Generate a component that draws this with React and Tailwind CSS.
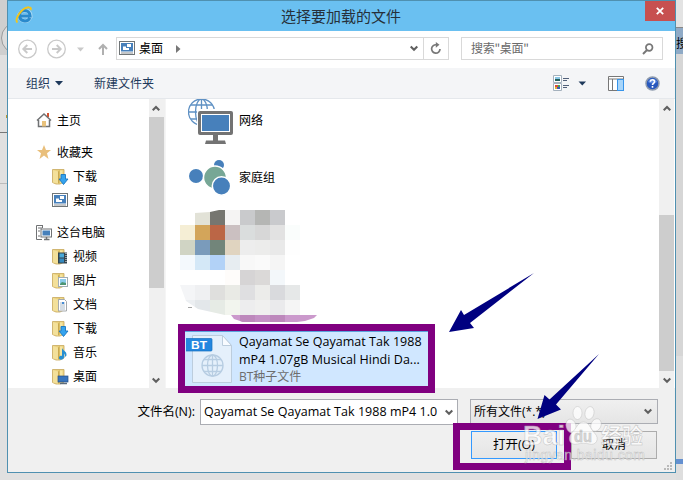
import React, { useState } from "react";

const PLACES = [
  { label: "主页", icon: "home" },
  { label: "收藏夹", icon: "star", gap: true },
  { label: "下载", icon: "download", child: true },
  { label: "桌面", icon: "desktop", child: true },
  { label: "这台电脑", icon: "pc", gap: true },
  { label: "视频", icon: "video", child: true },
  { label: "图片", icon: "picture", child: true },
  { label: "文档", icon: "document", child: true },
  { label: "下载", icon: "download", child: true },
  { label: "音乐", icon: "music", child: true },
  { label: "桌面", icon: "deskfolder", child: true },
];

const MOSAIC = [
  [null, "#e2e2d7", "#767670", "#f5f4f3", "#c9cacc", "#b5b6b4", "#c9cacd", null],
  ["#f5eed5", "#d3a55a", "#bb6646", "#cbc0c1", "#dadddd", "#d7d7d7", "#e2e2e2", "#fafdfc"],
  ["#d0d4c4", "#7a9bbb", "#72857a", "#e0d4c0", "#ededed", "#ececeb", "#e9e9e9", "#fefefe"],
  ["#f4f9fd", "#d4e8f7", "#b2d2f7", "#e7edf1", "#f8f8f8", "#fafafa", "#f5f5f5", null],
  [null, null, null, "#fefcfa", "#d6d4d5", "#dbd9d8", "#f3f7fa", null],
  ["#f4f5f7", "#eff0f2", "#dfdfdd", "#e9eae5", "#dfdfe1", "#ececea", "#d9dadd", "#e6e8e8"],
  ["#eceff2", "#e3e7ea", "#e6ebe5", "#f2f5ee", "#ededee", "#f0f0ef", "#eaeaec", "#f5f5f5"],
];

function DesktopIcon() {
  return (
    <svg width="17" height="15" viewBox="0 0 17 15" className="shrink-0">
      <rect x="0.5" y="0.5" width="15" height="13" fill="#fff" stroke="#707577" />
      <rect x="2" y="2" width="12" height="8.500" fill="#4780bb" />
      <path d="M8 3h4v3H8zM4 5.500h3v1.500h3v2H4z" fill="#fff" />
      <path d="M2 12h12" stroke="#8b8f92" />
    </svg>
  );
}

function FolderIcon({ type }) {
  return (
    <svg width="17" height="17" viewBox="0 0 17 17" className="shrink-0">
      <path d="M.5 1.500h11.500V14L8 16H4L.5 14.500z" fill="#ead07c" stroke="#cdb069" strokeWidth=".9" />
      <path d="M1 2l5 1.500v12L1 14.500z" fill="#f3e09a" />
      <path d="M6 3.500 7.500 2v12.500L6 15.500z" fill="#c9a94f" />
      <path d="M8 2.500h2.500V14L8 15z" fill="#f6e5a2" />
      {type === "download" && (
        <path d="M9 6.500h4.500V11H16l-4.500 5.500L7 11h2z" fill="#35a3ee" stroke="#1976bf" strokeWidth=".9" />
      )}
      {type === "video" && (
        <>
          <rect x="6" y="4.500" width="9" height="11" fill="#34444e" />
          <rect x="7.500" y="5.500" width="4.500" height="4" fill="#48a8d8" />
          <rect x="7.500" y="10.500" width="4.500" height="4" fill="#368abf" />
          <path d="M14 5v10" stroke="#fff" strokeDasharray="1 1" />
        </>
      )}
      {type === "picture" && (
        <>
          <rect x="6.500" y="5.500" width="9" height="9" fill="#fff" stroke="#a1adb4" />
          <rect x="8" y="7" width="6" height="6" fill="#8ccbea" />
          <path d="M8 12l2-2 4 1v2H8z" fill="#4d9574" />
        </>
      )}
      {type === "document" && (
        <>
          <path d="M6.500 3.500h6l2 2v9.500h-8z" fill="#fff" stroke="#a4a9ad" />
          <path d="M8 7h5M8 9h5M8 11h5M8 13h5" stroke="#93a8bd" strokeWidth=".8" />
          <path d="M10 6h2v2h-2z" fill="#468bd4" />
        </>
      )}
      {type === "music" && (
        <path d="M10 4c1 3 5 3 4.500 7.500l-2 2c1-3 0-3-.5-4v4c-1 3-5.500 3-5 0 0-1.500 2-2 3-1.500z" fill="#278fd2" />
      )}
      {type === "deskfolder" && (
        <>
          <rect x="6" y="8" width="10" height="6" fill="#3774be" stroke="#274e83" strokeWidth=".7" />
          <path d="M8 15.500h7" stroke="#5c6c7c" strokeWidth="1.500" />
        </>
      )}
    </svg>
  );
}

function PlaceIcon({ type }) {
  if (type === "desktop") return <DesktopIcon />;
  if (type === "home") {
    return (
      <svg width="16" height="16" viewBox="0 0 16 16" className="shrink-0">
        <path d="M11 1h2v4h-2z" fill="#d6512e" />
        <path d="M2.500 8v6.500h11V8M1 8.500 8 2l7 6.500" fill="none" stroke="#707274" strokeWidth="1.500" />
        <path d="M6 9h4v5.500H6z" fill="#e9c27c" />
      </svg>
    );
  }
  if (type === "star") {
    return (
      <svg width="16" height="16" viewBox="0 0 16 16" className="shrink-0">
        <path d="M8 1l2 5h5l-4 3.200L12.500 15 8 11.500 3.500 15 5 9.200 1 6h5z" fill="#e9bf7b" />
      </svg>
    );
  }
  if (type === "pc") {
    return (
      <svg width="16" height="17" viewBox="0 0 16 17" className="shrink-0">
        <path d="M6 1.500H.5v14H6M2 4h4M2 7h2M2 12h2M6.500 4V1" fill="none" stroke="#707274" />
        <rect x="5" y="5" width="10.500" height="8" fill="#fff" stroke="#707274" />
        <rect x="6.500" y="6.500" width="7.500" height="5" fill="#4780bb" />
        <path d="M10.500 13v2.500M8 15.500h5.500" stroke="#707274" strokeWidth="1.500" />
      </svg>
    );
  }
  return <FolderIcon type={type} />;
}

function Chevron({ up, className }) {
  return (
    <svg width="8" height="7" viewBox="0 0 8 7" className={className}>
      <path d={up ? "M.7 5.300 4 2l3.300 3.300" : "M.7 1.500 4 4.800l3.300-3.300"} fill="none" stroke="#5f5f5f" strokeWidth="2.100" />
    </svg>
  );
}

function TitleBar() {
  return (
    <header className="flex h-[30px] shrink-0 bg-[#6ac0f1]">
      <svg width="18" height="18" viewBox="0 0 18 18" className="mt-[5px] ml-[7px]">
        <path d="M15 11.500C13 17 4.500 15.500 4.500 9.500c0-6.500 11-7 11 .5H6" fill="none" stroke="#a9d8f3" strokeWidth="4" />
        <path d="M14.800 11.800C12.500 16.800 4.500 15.500 4.500 9.500c0-6.500 10.300-7 10.600.5H6" fill="none" stroke="#2a8acc" strokeWidth="3" />
        <path d="M2.500 16.500C-1.500 14 7 1 14 1.200c2 0 2.200 1.600 1.500 3" fill="none" stroke="#f3c51b" strokeWidth="1.900" />
      </svg>
      <h1 className="flex-1 pl-1 text-center text-[15px] leading-[29px] text-[#26303a]">选择要加载的文件</h1>
      <button type="button" className="flex h-5 w-[30px] items-center justify-center bg-[#c75050]">
        <svg width="8" height="8" viewBox="0 0 8 8">
          <path d="M.8.8l6.400 6.400M7.200.8.8 7.200" stroke="#fff" strokeWidth="1.800" />
        </svg>
      </button>
    </header>
  );
}

function NavBar() {
  return (
    <nav className="flex h-[37px] shrink-0 items-start bg-white pt-1.5">
      <svg width="100" height="24" viewBox="0 0 100 24" className="shrink-0" fill="none" stroke="#c9c9c9">
        <circle cx="19.500" cy="12" r="8.800" strokeWidth="1.300" />
        <circle cx="48.500" cy="12" r="8.800" strokeWidth="1.300" />
        <path d="M24 12h-8.500m3.800-4-4 4 4 4M44 12h8.500m-3.800-4 4 4-4 4" strokeWidth="1.900" />
        <path d="M69 10.500h7l-3.500 4z" fill="#c9c9c9" stroke="none" />
        <path d="M95 18V8m-4 4 4-4 4 4" stroke="#b0b0b0" strokeWidth="2" />
      </svg>
      <div className="ml-2 flex h-[23px] w-[333px] border border-[#d9d9d9]">
        <div className="flex flex-1 items-center pl-0.5">
          <DesktopIcon />
          <span className="ml-[3px] pb-0.5 text-xs leading-5">桌面</span>
          <svg width="5" height="8" viewBox="0 0 5 8" className="ml-[13px]">
            <path d="M0 0l4.500 4L0 8z" fill="#777" />
          </svg>
          <Chevron className="mr-[5px] ml-auto" />
        </div>
        <button type="button" className="flex w-[25px] items-center justify-center border-l border-[#d9d9d9]">
          <svg width="12" height="13" viewBox="0 0 12 13">
            <path d="M6.500 2.800A4.200 4.200 0 1 0 10 7" fill="none" stroke="#777" strokeWidth="1.700" />
            <path d="M5.800 0 9.500 2.800 5.800 5.800z" fill="#777" />
          </svg>
        </button>
      </div>
      <div className="ml-3 flex h-[23px] w-[202px] items-center border border-[#d9d9d9] px-[9px] text-xs text-[#6b6b6b]">
        <span className="pb-0.5 tracking-[-0.3px]">搜索"桌面"</span>
        <svg width="12" height="12" viewBox="0 0 12 12" className="-mr-px ml-auto" fill="none" stroke="#777">
          <circle cx="7.200" cy="4.500" r="3.300" strokeWidth="1.700" />
          <path d="M5 7 1 11" strokeWidth="2" />
        </svg>
      </div>
    </nav>
  );
}

function Toolbar() {
  return (
    <div className="flex h-[31px] shrink-0 items-center border-b border-[#e5e8ec] bg-[#f4f5f7] pl-[18px] text-xs text-[#1e395b]">
      <span>组织</span>
      <svg width="8" height="5" viewBox="0 0 8 5" className="ml-[5px]"><path d="M0 0h8L4 4.500z" fill="#1e395b" /></svg>
      <span className="ml-[31px]">新建文件夹</span>
      <svg width="33" height="17" viewBox="0 0 33 17" className="ml-auto">
        <path d="M.5.5h8v7h-8zM.5 8.500h8v7h-8z" fill="#fff" stroke="#a4b1bd" />
        <path d="M2 2h5v2H2z" fill="#8bc7e6" /><path d="M2 4h5v2H2z" fill="#24605b" />
        <path d="M2 10h3v2H2z" fill="#da4c36" /><path d="M5 10h2v2H5z" fill="#40a353" />
        <path d="M2 12h2v2H2z" fill="#e1b62f" /><path d="M4 12h3v2H4z" fill="#4358b3" />
        <path d="M10 3.500h6M10 5.500h4M10 10.500h6M10 12.500h4" stroke="#516079" />
        <path d="M25.500 6.500H33l-3.750 4z" fill="#1e395b" />
      </svg>
      <svg width="16" height="15" viewBox="0 0 16 15" className="ml-[22px]">
        <path d="M.5.500h15v14H.5zM.5 3h15M4.500 3v11" fill="#fff" stroke="#777" />
        <rect x="9.500" y="3.500" width="6" height="11" fill="#a7d5fa" stroke="#3794ea" />
      </svg>
      <svg width="15" height="15" viewBox="0 0 15 15" className="mr-[15px] ml-[21px]">
        <circle cx="7.500" cy="7.500" r="6.500" fill="#2858bd" stroke="#8f9bad" strokeWidth="1.500" />
        <path d="M3 6a4.800 4.800 0 0 1 9 0c-3 2-6 2-9 0z" fill="#5c8ae0" />
        <path d="M5.400 5.800c.1-3 4.500-2.500 4.100 0-.3 1.600-2 1.500-2 3.200M7.500 10v1.700" fill="none" stroke="#fff" strokeWidth="1.600" />
      </svg>
    </div>
  );
}

function Sidebar() {
  return (
    <aside className="flex w-[157px] shrink-0">
      <ul className="flex-1 pt-[9px]">
        {PLACES.map((p, i) => (
          <li
            key={i}
            className={`flex h-6 items-center text-xs whitespace-nowrap ${p.gap ? "mt-2" : ""} ${p.child ? "gap-1 pl-11" : "gap-[5px] pl-7"}`}
          >
            <PlaceIcon type={p.icon} />
            <span>{p.label}</span>
          </li>
        ))}
      </ul>
      <div className="flex w-4 flex-col items-start bg-[#f0f0f0]">
        <Chevron up className="mx-[3px] mt-1.5 mb-[5px]" />
        <div className="h-[171px] w-[15px] bg-[#cdcdcd]" />
        <Chevron className="mx-[3px] mt-auto mb-1" />
      </div>
    </aside>
  );
}

function Mosaic() {
  return (
    <svg width="140" height="114" viewBox="0 0 140 114" className="block" shapeRendering="crispEdges">
      <defs>
        <clipPath id="patch">
          <path d="M0 15h15V3l15-1 9-2h81v107H54l-18-4-18-4-12-8-6-16z" />
        </clipPath>
        <clipPath id="blob">
          <path d="M51 105h86l-3 3-9 3-8 1H63l-9-3z" />
        </clipPath>
      </defs>
      <g clipPath="url(#patch)">
        {MOSAIC.map((row, y) =>
          row.map((c, x) => c && <rect key={`${x}-${y}`} x={x * 15} y={y * 15} width="15" height="15" fill={c} />)
        )}
      </g>
      <g clipPath="url(#blob)">
        <path d="M50 105h90v8H50z" fill="#cb99cc" />
        <path d="M60 105h15v8H60zM90 105h15v8H90z" fill="#bd88bc" />
        <path d="M75 105h15v8H75z" fill="#c491c5" />
      </g>
      <path d="M8 97.500h4" stroke="#a5a5a5" />
    </svg>
  );
}

function FileList() {
  return (
    <section className="flex min-w-0 flex-1 border-l border-[#f5f5f5] bg-white">
      <div className="flex min-w-0 flex-1 flex-col overflow-hidden">
        <div className="flex h-[45px] shrink-0 pl-[22px]">
          <svg width="46" height="45" viewBox="0 0 46 45">
            <g fill="none" stroke="#5f91c4" strokeWidth="1.300">
              <circle cx="13.500" cy="13" r="13" />
              <ellipse cx="13.500" cy="13" rx="6" ry="13" />
              <path d="M13.500 0v26M.5 13h26M3 6h21M3 20h21" />
            </g>
            <rect x="9" y="10" width="37" height="28" rx="2.500" fill="#fff" />
            <rect x="10" y="12" width="35" height="24" rx="2" fill="#737373" />
            <rect x="13" y="15" width="29" height="18" fill="#fff" />
            <rect x="14" y="16" width="27" height="16" fill="#4780bb" />
            <path d="M25 36h5v5.500h7l1 3.500H17l1-3.500h7z" fill="#737373" />
          </svg>
          <span className="ml-[5px] pt-[11px] text-xs leading-5">网络</span>
        </div>
        <div className="mt-4 flex h-9 shrink-0 pl-[22px]">
          <svg width="46" height="36" viewBox="0 0 46 36">
            <g fill="#4780bb">
              <circle cx="8" cy="16" r="7" />
              <circle cx="31" cy="5" r="5" />
              <circle cx="27" cy="17.500" r="11.500" fill="#77a796" stroke="#fff" strokeWidth="1.500" />
              <circle cx="33.500" cy="26" r="9.200" stroke="#fff" strokeWidth="1.500" />
            </g>
          </svg>
          <span className="ml-[5px] pt-[7px] text-xs leading-5">家庭组</span>
        </div>
        <div className="mt-[14px] shrink-0 pl-[14px]">
          <Mosaic />
        </div>
        <div className="mt-[7px] ml-[18px] flex h-[56px] w-[246px] shrink-0 border-t border-[#5ca3dd] bg-[#d0e7ff]">
          <svg width="48" height="54" viewBox="0 0 48 54" className="ml-0.5 shrink-0">
            <path d="M6.500 3.500h30l9 10v37h-39z" fill="#e5f0fb" stroke="#bccddd" />
            <path d="M36.500 3.500v10h9z" fill="#f8fbff" stroke="#bccddd" />
            <g fill="none" stroke="#b7cde2" strokeWidth="1.300">
              <circle cx="26.500" cy="33.500" r="10.500" />
              <ellipse cx="26.500" cy="33.500" rx="5" ry="10.500" />
              <path d="M26.500 23v21M16 33.500h21M18 27.500h17M18 39.500h17" />
            </g>
            <rect x="-1" y="6.500" width="27" height="12.500" rx="1" fill="#2386df" stroke="#1671bf" strokeWidth=".7" />
            <text x="5" y="16.500" textLength="16" lengthAdjust="spacingAndGlyphs" className="fill-white font-['Liberation_Sans'] text-[10px] font-bold">BT</text>
          </svg>
          <div className="pt-px pl-[5px] font-['Open_Sans','Noto_Sans_CJK_SC',sans-serif] text-xs leading-[17.500px] whitespace-nowrap">
            <p className="text-[12.500px] tracking-[0.04px]">Qayamat Se Qayamat Tak 1988</p>
            <p className="text-[12.500px] tracking-[0.04px]">mP4 1.07gB Musical Hindi Da...</p>
            <p className="text-[#6d6d6d]">BT种子文件</p>
          </div>
        </div>
      </div>
      <div className="mr-px flex w-[15px] flex-col items-center bg-[#f0f0f0]">
        <Chevron up className="mt-1.5" />
        <div className="mt-auto h-[156px] w-[15px] bg-[#cdcdcd]" />
        <Chevron className="mt-1.5 mb-1" />
      </div>
    </section>
  );
}

function Footer({ fileName, setFileName }) {
  return (
    <footer className="flex h-[84px] shrink-0 flex-col bg-[#f0f0f0] pt-[11px] text-xs">
      <div className="flex h-[26px] items-start">
        <label htmlFor="filename" className="w-[192px] pr-[5px] text-right font-['Open_Sans','Noto_Sans_CJK_SC',sans-serif] text-[12.500px] leading-[25px] whitespace-nowrap">文件名(N):</label>
        <div className="flex h-[26px] w-[258px] items-center border border-[#abadb3] bg-white pl-[3px]">
          <input
            id="filename"
            className="min-w-0 flex-1 font-['Open_Sans',sans-serif] text-[12.500px] tracking-[0.04px] outline-none"
            value={fileName}
            onChange={(e) => setFileName(e.target.value)}
            type="text"
          />
          <Chevron className="mr-1 ml-1.5" />
        </div>
        <div className="ml-3 flex h-[25px] w-[188px] items-center border border-[#abadb3] bg-linear-to-b from-[#f0f0f0] to-[#e5e5e5] px-[3px] font-['Open_Sans','Noto_Sans_CJK_SC',sans-serif]">
          所有文件(*.*)
          <Chevron className="mr-0.5 ml-auto" />
        </div>
      </div>
      <div className="mt-1.5 flex justify-end gap-[14px] pr-[18px] font-['Open_Sans','Noto_Sans_CJK_SC',sans-serif]">
        <button type="button" className="h-7 w-[86px] border border-[#3399ff] bg-linear-to-b from-[#efefef] to-[#e5e5e5] text-[12.500px]">打开(O)</button>
        <button type="button" className="h-7 w-[86px] border border-[#acacac] bg-linear-to-b from-[#efefef] to-[#e5e5e5]">取消</button>
      </div>
    </footer>
  );
}

function Watermark() {
  return (
    <svg width="130" height="70" viewBox="0 0 130 70" className="absolute top-[400px] left-[520px] fill-white stroke-[#b4b4b4] opacity-75" strokeWidth=".5">
      <text x="3" y="44.500" textLength="42" lengthAdjust="spacingAndGlyphs" className="font-['Liberation_Sans'] text-[27px] font-bold">Bai</text>
      <ellipse cx="51" cy="26" rx="5" ry="7" transform="rotate(-15 51 26)" />
      <ellipse cx="57.500" cy="13" rx="4.500" ry="6.500" />
      <ellipse cx="69.500" cy="13" rx="4.500" ry="6.500" transform="rotate(12 69.500 13)" />
      <ellipse cx="76" cy="25" rx="5" ry="6.500" transform="rotate(25 76 25)" />
      <path d="M63.500 22c6 0 6 6 11 11 6 6 1 13-5 11-4-1-8-1-12 0-7 2-11-5-6-11 5-4 6-11 12-11z" />
      <text x="54" y="42" textLength="18" lengthAdjust="spacingAndGlyphs" className="fill-[#cfcfcf] font-['Liberation_Sans'] text-[16px] font-bold">du</text>
      <text x="81" y="43" textLength="42" className="font-['Noto_Sans_CJK_SC',sans-serif] text-[21px] font-bold">经验</text>
      <text x="5" y="60" textLength="120" className="font-['Liberation_Sans'] text-[14px]">jingyan.baidu.com</text>
    </svg>
  );
}

// Highlight boxes and arrows drawn over the dialog
function Annotations() {
  return (
    <div className="pointer-events-none">
      <div className="absolute top-[324px] left-[178px] h-[69px] w-[257px] border-7 border-[#800080]" />
      <div className="absolute top-[423px] left-[453px] h-[47px] w-[118px] border-7 border-[#800080]" />
      <svg width="160" height="155" viewBox="445 270 160 155" className="absolute top-[270px] left-[445px]" fill="#000080">
        <path d="M449 332l12-22 3 5 70-42-64 50 4 5z" />
        <path d="M537.500 419l7-24 5 4.500L599 354l-43 50.500 5 5z" />
      </svg>
      <Watermark />
    </div>
  );
}

export default function App() {
  const [fileName, setFileName] = useState("Qayamat Se Qayamat Tak 1988 mP4 1.0");

  return (
    <div className="relative flex h-[480px] w-[683px] overflow-hidden bg-[#e0e0e0] font-['Noto_Sans_CJK_SC',sans-serif] text-black">
      {/* Page behind the dialog */}
      <div className="w-[7px] shrink-0 overflow-hidden">
        <svg width="7" height="480" viewBox="0 0 7 480">
          <path d="M0 0h7v55H0z" fill="#cfcfcf" />
          <circle cx="17" cy="38" r="15.500" fill="#dcdcdc" stroke="#9b9b9b" />
          <path d="M0 132.500h7" stroke="#777" />
          <path d="M0 183.500h7" stroke="#bbb" />
          <path d="M6 115h1v3H6z" fill="#b79a36" />
        </svg>
      </div>
      <main className="flex h-[473px] w-[669px] shrink-0 flex-col border border-[#4f90b0] bg-white">
        <TitleBar />
        <NavBar />
        <Toolbar />
        <div className="flex h-[289px] shrink-0">
          <Sidebar />
          <FileList />
        </div>
        <Footer fileName={fileName} setFileName={setFileName} />
      </main>
      <div className="flex w-[7px] shrink-0 flex-col overflow-hidden bg-[#dedede] text-xs">
        <div className="h-[27px] shrink-0 bg-[#e3e3e3]" />
        <div className="h-[27px] shrink-0 border-t border-[#888] bg-[#8faac6] leading-[29px] whitespace-nowrap">搜</div>
        <div className="h-[302px] shrink-0 bg-[#d6d6d6]" />
        <div className="mt-[103px] h-[5px] shrink-0 bg-[#6490d0]" />
      </div>
      <svg width="9" height="9" viewBox="0 0 9 9" className="absolute top-[462px] left-[664px]" fill="#b9b9b9">
        <path d="M6 0h2v2H6zM3 3h2v2H3zM6 3h2v2H6zM0 6h2v2H0zM3 6h2v2H3zM6 6h2v2H6z" />
      </svg>
      <Annotations />
    </div>
  );
}
